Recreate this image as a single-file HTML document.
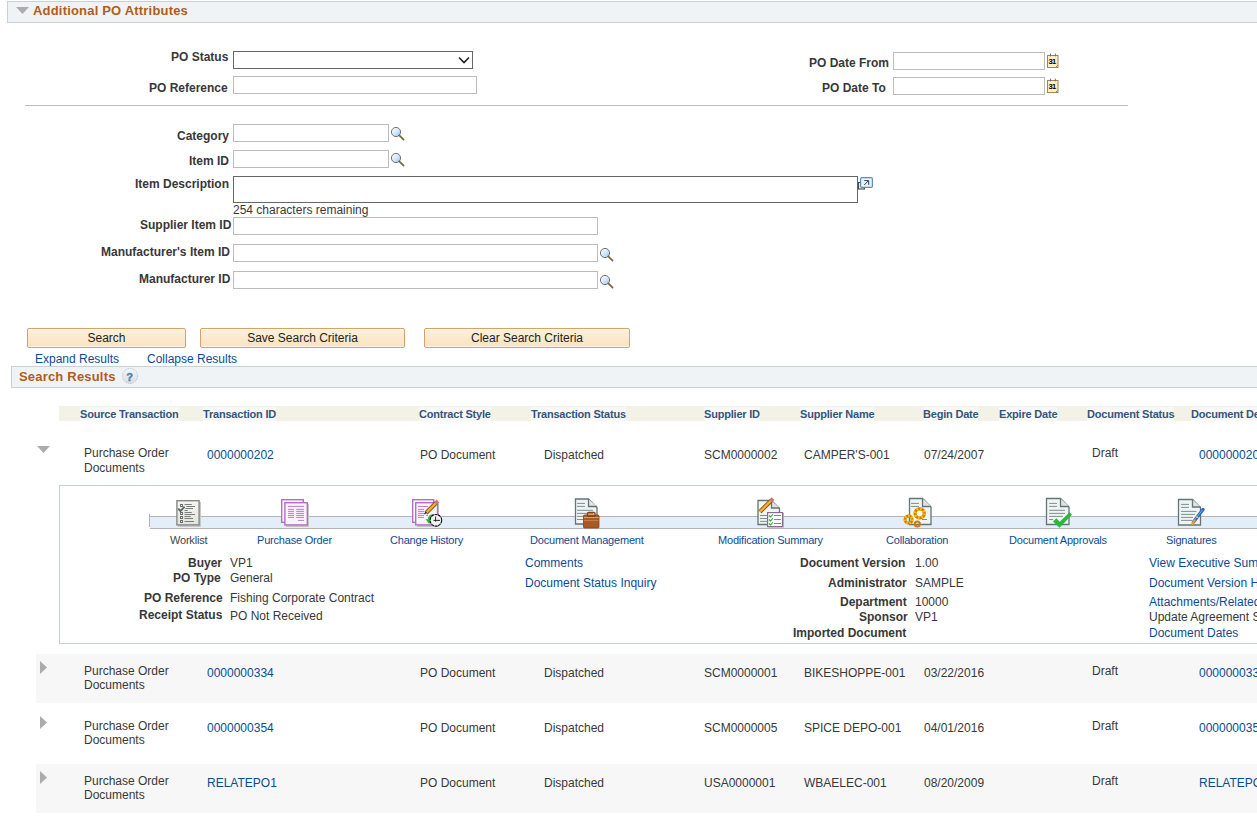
<!DOCTYPE html>
<html><head><meta charset="utf-8">
<style>
html,body{margin:0;padding:0;background:#fff;}
body{width:1257px;height:833px;overflow:hidden;position:relative;font-family:"Liberation Sans",sans-serif;}
.a{position:absolute;white-space:nowrap;}
.lb{position:absolute;white-space:nowrap;font:bold 12px/14px "Liberation Sans",sans-serif;color:#383838;}
.tx{position:absolute;white-space:nowrap;font:12px/14px "Liberation Sans",sans-serif;color:#383838;}
.lk{position:absolute;white-space:nowrap;font:12px/14px "Liberation Sans",sans-serif;color:#0a4b96;}
.inp{position:absolute;box-sizing:border-box;border:1px solid #bcbcbc;background:#fff;height:18px;}
.hdr{position:absolute;box-sizing:border-box;border:1px solid #cbd0d7;background:#f0f3f5;}
.ht{position:absolute;white-space:nowrap;font:bold 13px/16px "Liberation Sans",sans-serif;color:#b35c17;letter-spacing:0.19px;}
.btn{position:absolute;box-sizing:border-box;border:1px solid #d9a06a;border-radius:2px;height:20px;
 background:linear-gradient(#fdf0da,#f9e3c0);font:12px/18px "Liberation Sans",sans-serif;color:#222;text-align:center;box-shadow:inset 0 1px 0 #fffaf0,inset 0 -1px 0 #fdf3e2;}
.th{position:absolute;white-space:nowrap;font:bold 11px/13px "Liberation Sans",sans-serif;color:#36557a;letter-spacing:-0.2px;background:#f8f8f6;height:14px;line-height:15px;}
.ic{position:absolute;}
.il{position:absolute;white-space:nowrap;font:11px/13px "Liberation Sans",sans-serif;color:#0a4b96;letter-spacing:-0.2px;}
</style></head><body>

<!-- Additional PO Attributes header -->
<div class="hdr" style="left:7px;top:1px;width:1260px;height:22px;"></div>
<svg class="ic" style="left:16px;top:7px" width="14" height="7" viewBox="0 0 14 7"><path d="M0 0H13L6.5 7Z" fill="#acacac"/></svg>
<div class="ht" style="left:33px;top:3px">Additional PO Attributes</div>

<!-- PO Status row -->
<div class="lb" style="left:171px;top:50px">PO Status</div>
<div class="inp" style="left:233px;top:51px;width:240px;height:18px;border-color:#666"></div>
<svg class="ic" style="left:458px;top:56px" width="12" height="8" viewBox="0 0 12 8"><path d="M1 1.5L6 6.5L11 1.5" fill="none" stroke="#222" stroke-width="1.6"/></svg>
<div class="lb" style="left:149px;top:81px">PO Reference</div>
<div class="inp" style="left:233px;top:76px;width:244px;"></div>

<div class="lb" style="left:809px;top:56px">PO Date From</div>
<div class="inp" style="left:893px;top:52px;width:152px;"></div>
<div class="lb" style="left:822px;top:81px">PO Date To</div>
<div class="inp" style="left:893px;top:77px;width:152px;"></div>

<div class="a" style="left:25px;top:105px;width:1103px;height:1px;background:#bdbdbd"></div>

<div class="lb" style="left:177px;top:129px">Category</div>
<div class="inp" style="left:233px;top:124px;width:156px;"></div>
<div class="lb" style="left:189px;top:154px">Item ID</div>
<div class="inp" style="left:233px;top:150px;width:156px;"></div>
<div class="lb" style="left:135px;top:177px">Item Description</div>
<div class="inp" style="left:233px;top:176px;width:625px;height:27px;border-color:#666"></div>
<div class="tx" style="left:233px;top:203px">254 characters remaining</div>
<div class="lb" style="left:140px;top:218px">Supplier Item ID</div>
<div class="inp" style="left:233px;top:217px;width:365px;"></div>
<div class="lb" style="left:101px;top:245px">Manufacturer's Item ID</div>
<div class="inp" style="left:233px;top:244px;width:365px;"></div>
<div class="lb" style="left:139px;top:272px">Manufacturer ID</div>
<div class="inp" style="left:233px;top:271px;width:365px;"></div>

<!-- buttons -->
<div class="btn" style="left:27px;top:328px;width:159px;">Search</div>
<div class="btn" style="left:200px;top:328px;width:205px;">Save Search Criteria</div>
<div class="btn" style="left:424px;top:328px;width:206px;">Clear Search Criteria</div>
<div class="lk" style="left:35px;top:352px">Expand Results</div>
<div class="lk" style="left:147px;top:352px">Collapse Results</div>

<!-- Search Results header -->
<div class="hdr" style="left:11px;top:366px;width:1260px;height:22px;"></div>
<div class="ht" style="left:19px;top:369px">Search Results</div>

<!-- ICONS_PLACEHOLDER -->


<!-- results header -->
<div class="a" style="left:59px;top:406px;width:1200px;height:15px;background:#f2f2e6"></div>
<div class="th" style="left:80px;top:407px">Source Transaction</div>
<div class="th" style="left:203px;top:407px">Transaction ID</div>
<div class="th" style="left:419px;top:407px">Contract Style</div>
<div class="th" style="left:531px;top:407px">Transaction Status</div>
<div class="th" style="left:704px;top:407px">Supplier ID</div>
<div class="th" style="left:800px;top:407px">Supplier Name</div>
<div class="th" style="left:923px;top:407px">Begin Date</div>
<div class="th" style="left:999px;top:407px">Expire Date</div>
<div class="th" style="left:1087px;top:407px">Document Status</div>
<div class="th" style="left:1191px;top:407px">Document Description</div>

<!-- row 1 expanded -->
<svg class="ic" style="left:37px;top:446px" width="14" height="7" viewBox="0 0 14 7"><path d="M0 0H13L6.5 7Z" fill="#acacac"/></svg>
<div class="tx" style="left:84px;top:446px;line-height:15px">Purchase Order<br>Documents</div>
<div class="lk" style="left:207px;top:448px">0000000202</div>
<div class="tx" style="left:420px;top:448px">PO Document</div>
<div class="tx" style="left:544px;top:448px">Dispatched</div>
<div class="tx" style="left:704px;top:448px">SCM0000002</div>
<div class="tx" style="left:804px;top:448px">CAMPER'S-001</div>
<div class="tx" style="left:924px;top:448px">07/24/2007</div>
<div class="tx" style="left:1092px;top:446px">Draft</div>
<div class="lk" style="left:1199px;top:448px">0000000202</div>

<!-- detail panel -->
<div class="a" style="left:59px;top:485px;width:1250px;height:159px;box-sizing:border-box;border:1px solid #c9ced6;background:#fff"></div>
<div class="a" style="left:149px;top:514px;width:1px;height:13px;background:#b4b4b4"></div>
<div class="a" style="left:150px;top:516px;width:1150px;height:13px;box-sizing:border-box;border-top:1px solid #b4b4b4;border-bottom:1px solid #b4b4b4;background:#e4eefa"></div>

<div class="il" style="left:170px;top:534px;color:#444">Worklist</div>
<div class="il" style="left:257px;top:534px">Purchase Order</div>
<div class="il" style="left:390px;top:534px">Change History</div>
<div class="il" style="left:530px;top:534px">Document Management</div>
<div class="il" style="left:718px;top:534px">Modification Summary</div>
<div class="il" style="left:886px;top:534px">Collaboration</div>
<div class="il" style="left:1009px;top:534px">Document Approvals</div>
<div class="il" style="left:1166px;top:534px">Signatures</div>

<div class="lb" style="left:188px;top:556px">Buyer</div>
<div class="tx" style="left:230px;top:556px">VP1</div>
<div class="lb" style="left:173px;top:571px">PO Type</div>
<div class="tx" style="left:230px;top:571px">General</div>
<div class="lb" style="left:144px;top:591px">PO Reference</div>
<div class="tx" style="left:230px;top:591px">Fishing Corporate Contract</div>
<div class="lb" style="left:139px;top:608px">Receipt Status</div>
<div class="tx" style="left:230px;top:609px">PO Not Received</div>

<div class="lk" style="left:525px;top:556px">Comments</div>
<div class="lk" style="left:525px;top:576px">Document Status Inquiry</div>

<div class="lb" style="left:800px;top:556px">Document Version</div>
<div class="tx" style="left:915px;top:556px">1.00</div>
<div class="lb" style="left:828px;top:576px">Administrator</div>
<div class="tx" style="left:915px;top:576px">SAMPLE</div>
<div class="lb" style="left:840px;top:595px">Department</div>
<div class="tx" style="left:915px;top:595px">10000</div>
<div class="lb" style="left:859px;top:610px">Sponsor</div>
<div class="tx" style="left:915px;top:610px">VP1</div>
<div class="lb" style="left:793px;top:626px">Imported Document</div>

<div class="lk" style="left:1149px;top:556px">View Executive Summary</div>
<div class="lk" style="left:1149px;top:576px">Document Version History</div>
<div class="lk" style="left:1149px;top:595px">Attachments/Related Documents</div>
<div class="tx" style="left:1149px;top:610px">Update Agreement Status</div>
<div class="lk" style="left:1149px;top:626px">Document Dates</div>
<div class="a" style="left:36px;top:654px;width:1230px;height:49px;background:#f7f7f7"></div>
<svg class="ic" style="left:40px;top:661px" width="7" height="13" viewBox="0 0 7 13"><path d="M0 0L7 6.5L0 13Z" fill="#acacac"/></svg>
<div class="tx" style="left:84px;top:664px">Purchase Order<br>Documents</div>
<div class="lk" style="left:207px;top:666px">0000000334</div>
<div class="tx" style="left:420px;top:666px">PO Document</div>
<div class="tx" style="left:544px;top:666px">Dispatched</div>
<div class="tx" style="left:704px;top:666px">SCM0000001</div>
<div class="tx" style="left:804px;top:666px">BIKESHOPPE-001</div>
<div class="tx" style="left:924px;top:666px">03/22/2016</div>
<div class="tx" style="left:1092px;top:664px">Draft</div>
<div class="lk" style="left:1199px;top:666px">0000000334</div>
<svg class="ic" style="left:40px;top:716px" width="7" height="13" viewBox="0 0 7 13"><path d="M0 0L7 6.5L0 13Z" fill="#acacac"/></svg>
<div class="tx" style="left:84px;top:719px">Purchase Order<br>Documents</div>
<div class="lk" style="left:207px;top:721px">0000000354</div>
<div class="tx" style="left:420px;top:721px">PO Document</div>
<div class="tx" style="left:544px;top:721px">Dispatched</div>
<div class="tx" style="left:704px;top:721px">SCM0000005</div>
<div class="tx" style="left:804px;top:721px">SPICE DEPO-001</div>
<div class="tx" style="left:924px;top:721px">04/01/2016</div>
<div class="tx" style="left:1092px;top:719px">Draft</div>
<div class="lk" style="left:1199px;top:721px">0000000354</div>
<div class="a" style="left:36px;top:764px;width:1230px;height:49px;background:#f7f7f7"></div>
<svg class="ic" style="left:40px;top:771px" width="7" height="13" viewBox="0 0 7 13"><path d="M0 0L7 6.5L0 13Z" fill="#acacac"/></svg>
<div class="tx" style="left:84px;top:774px">Purchase Order<br>Documents</div>
<div class="lk" style="left:207px;top:776px">RELATEPO1</div>
<div class="tx" style="left:420px;top:776px">PO Document</div>
<div class="tx" style="left:544px;top:776px">Dispatched</div>
<div class="tx" style="left:704px;top:776px">USA0000001</div>
<div class="tx" style="left:804px;top:776px">WBAELEC-001</div>
<div class="tx" style="left:924px;top:776px">08/20/2009</div>
<div class="tx" style="left:1092px;top:774px">Draft</div>
<div class="lk" style="left:1199px;top:776px">RELATEPO1</div>


<svg class="ic" style="left:0;top:0" width="1257" height="833" viewBox="0 0 1257 833">
<defs>
<linearGradient id="gw" x1="0" y1="0" x2="0" y2="1"><stop offset="0" stop-color="#f4f5f3"/><stop offset="1" stop-color="#dfe6da"/></linearGradient>
<linearGradient id="gm" x1="0" y1="0" x2="1" y2="1"><stop offset="0" stop-color="#ffffff"/><stop offset="0.5" stop-color="#d8e8fb"/><stop offset="1" stop-color="#8fc3f5"/></linearGradient>
<linearGradient id="gh" x1="0" y1="0" x2="0" y2="1"><stop offset="0" stop-color="#f6f6f6"/><stop offset="1" stop-color="#dcdcdc"/></linearGradient>
</defs>
<!-- calendars -->
<g id="cal1">
<rect x="1047.5" y="55.5" width="10.5" height="12" fill="#fbefc4" stroke="#9c8550" stroke-width="1"/>
<path d="M1055.5 67.5L1058 65" stroke="#9c8550" stroke-width="1" fill="#e0d090"/>
<rect x="1050" y="53.6" width="0.9" height="2.8" fill="#6e5e90"/><rect x="1054.9" y="53.6" width="0.9" height="2.8" fill="#6e5e90"/>
<text x="1048.6" y="64.2" font-family="Liberation Sans" font-weight="bold" font-size="7.6" fill="#000" letter-spacing="-0.7">31</text>
</g>
<g transform="translate(0,25)">
<rect x="1047.5" y="55.5" width="10.5" height="12" fill="#fbefc4" stroke="#9c8550" stroke-width="1"/>
<path d="M1055.5 67.5L1058 65" stroke="#9c8550" stroke-width="1" fill="#e0d090"/>
<rect x="1050" y="53.6" width="0.9" height="2.8" fill="#6e5e90"/><rect x="1054.9" y="53.6" width="0.9" height="2.8" fill="#6e5e90"/>
<text x="1048.6" y="64.2" font-family="Liberation Sans" font-weight="bold" font-size="7.6" fill="#000" letter-spacing="-0.7">31</text>
</g>
<!-- magnifiers -->
<g id="mag">
<circle cx="396" cy="132" r="4.6" fill="url(#gm)" stroke="#707070" stroke-width="1"/>
<path d="M399.3 135.3L403.6 139.6" stroke="#736b3a" stroke-width="1.7" stroke-linecap="round"/>
</g>
<g transform="translate(0,26)">
<circle cx="396" cy="132" r="4.6" fill="url(#gm)" stroke="#707070" stroke-width="1"/>
<path d="M399.3 135.3L403.6 139.6" stroke="#736b3a" stroke-width="1.7" stroke-linecap="round"/>
</g>
<g transform="translate(209,121)">
<circle cx="396" cy="132" r="4.6" fill="url(#gm)" stroke="#707070" stroke-width="1"/>
<path d="M399.3 135.3L403.6 139.6" stroke="#736b3a" stroke-width="1.7" stroke-linecap="round"/>
</g>
<g transform="translate(209,148)">
<circle cx="396" cy="132" r="4.6" fill="url(#gm)" stroke="#707070" stroke-width="1"/>
<path d="M399.3 135.3L403.6 139.6" stroke="#736b3a" stroke-width="1.7" stroke-linecap="round"/>
</g>
<!-- expand textarea icon -->
<rect x="858.5" y="182.5" width="6" height="6.5" fill="#eef2f4" stroke="#4a4a4a" stroke-width="1.1"/>
<rect x="860.6" y="177.6" width="11.8" height="9.8" rx="1.2" fill="#eef1f2" stroke="#5b8cbc" stroke-width="1.2"/>
<path d="M864.2 185L868.3 180.9M864.3 180.6H868.7V184.8" stroke="#2e3e50" stroke-width="1" fill="none"/>
<!-- help icon -->
<circle cx="130" cy="376" r="7.5" fill="url(#gh)" stroke="#a9bfe6" stroke-width="0.9" stroke-dasharray="1.5 1"/>
<text x="126.3" y="380.5" font-family="Liberation Sans" font-weight="bold" font-size="11" fill="#4a82b0" stroke="#4a82b0" stroke-width="0.4">?</text>
<!-- Worklist icon -->
<rect x="178" y="502" width="23" height="25" fill="#c9c9c9"/>
<rect x="176.9" y="500.7" width="22.2" height="24.2" fill="url(#gw)" stroke="#888" stroke-width="1.4"/>
<g stroke="#6e6e6e" stroke-width="1" fill="#fff">
<rect x="180.5" y="504.5" width="2" height="2"/>
<rect x="180.5" y="512.5" width="2" height="2"/>
<rect x="180.5" y="516.5" width="2" height="2"/>
<rect x="180.5" y="520.5" width="2" height="2"/>
</g>
<g stroke="#707070" stroke-width="0.9" fill="none">
<path d="M184.5 504.5H191.8M186.3 506.5H195M185.3 508.5H193M184.5 510.5H187.7M184.5 512.5H191.8M184.5 514.5H195M184.5 516.5H190.8M184.5 518.5H193M184.5 521.5H194"/>
</g>
<path d="M178.2 508.6L180.5 511L184.6 506.6" stroke="#666" stroke-width="1.9" fill="none"/>
<!-- Purchase Order icon -->
<rect x="281.7" y="499.7" width="21.6" height="22.6" fill="#fff" stroke="#b46ec6" stroke-width="1.4"/>
<rect x="286" y="504" width="23" height="23" fill="#c4c4c4"/>
<rect x="284.9" y="502.7" width="22.4" height="22.2" fill="#fbf3fc" stroke="#b46ec6" stroke-width="1.4"/>
<g stroke="#b46ec6" stroke-width="0.9">
<path d="M288 506.4H304M288 509.4H294M296.2 509.4H304M288 511.4H294M296.2 511.4H304M288 513.4H294M296.2 513.4H304M288 515.4H294M296.2 515.4H304M288 517.4H294M296.2 517.4H304M298 520.4H304"/>
</g>

<!-- Change History icon -->
<rect x="412.7" y="499.7" width="21" height="22.6" fill="#fff" stroke="#b46ec6" stroke-width="1.4"/>
<rect x="417" y="504" width="22" height="23" fill="#c4c4c4"/>
<rect x="415.7" y="502.7" width="21.8" height="22.2" fill="#fbf3fc" stroke="#b46ec6" stroke-width="1.4"/>
<g stroke="#b46ec6" stroke-width="0.9">
<path d="M418 506.4H428M418 509.4H424M418 511.4H424M418 513.4H424M418 515.4H424M418 517.4H424M426 515.4H428"/>
</g>
<path d="M426 513L436.5 502.5" stroke="#8a4a14" stroke-width="4.2" stroke-linecap="butt"/>
<path d="M426 513L436.5 502.5" stroke="#f0b030" stroke-width="2.4"/>
<path d="M435.5 503.5L438 501" stroke="#c87878" stroke-width="4"/>
<path d="M424.5 514L426.5 512" stroke="#223366" stroke-width="1.5"/>
<path d="M433.8 515.2Q429.3 515.6 429 519.5" stroke="#2ab040" stroke-width="2.6" fill="none"/>
<path d="M425.6 519.2H432.6L429.1 523.9Z" fill="#2ab040"/>
<circle cx="435.9" cy="520.3" r="5.8" fill="#eef2f2" stroke="#111" stroke-width="1.1" stroke-dasharray="3 0.6"/>
<path d="M435.6 516.6V521.6M433.5 520.4H440" stroke="#111" stroke-width="0.9" fill="none"/>

<!-- Document Management icon -->
<path d="M575.5 499H588.5L597 507.5V524H575.5Z" fill="#f1f4f4" stroke="#617676" stroke-width="1.3"/>
<path d="M588.5 499V506.5H597" fill="#e0e4e4" stroke="#617676" stroke-width="1.3"/>
<g stroke="#6f8383" stroke-width="0.9"><path d="M577 503.4H585M577 506.4H585M577 510.3H593M577 513.4H593M577 516.4H593M577 519.5H593"/></g>
<rect x="583.5" y="515" width="15.5" height="13" rx="1" fill="#a95a22" stroke="#8c400e" stroke-width="0.8"/>
<rect x="587.5" y="512.5" width="7.5" height="4" rx="1" fill="none" stroke="#8c400e" stroke-width="1.3"/>
<path d="M584 517.5H598.5" stroke="#e0a060" stroke-width="1"/>
<path d="M584 520.5H598.5" stroke="#c8885a" stroke-width="0.8"/>

<!-- Modification Summary icon -->
<path d="M758 500.5H771.5L779.5 508.5V524.5H758Z" fill="#f1f4f4" stroke="#617676" stroke-width="1.3"/>
<path d="M771.5 500.5V508H779.5" fill="#e0e4e4" stroke="#617676" stroke-width="1.3"/>
<g stroke="#6f8383" stroke-width="0.9"><path d="M760 515.5H767M760 518.5H767M760 521.4H767"/></g>
<path d="M760 511.7L771.3 500.4" stroke="#8a4a14" stroke-width="4.2"/>
<path d="M760 511.7L771.3 500.4" stroke="#f0b030" stroke-width="2.4"/>
<path d="M770.6 501.1L773 498.7" stroke="#c87878" stroke-width="4"/>
<rect x="768.5" y="513" width="15.5" height="14.5" fill="#c0c0c0"/>
<rect x="767.6" y="512.6" width="15" height="14" fill="#fff" stroke="#8a6a8a" stroke-width="1.2"/>
<g stroke="#23a83a" stroke-width="1.1" fill="none"><path d="M769 515.5L770.5 517L772.8 514.3M769 519.5L770.5 521L772.8 518.3M769 523.5L770.5 525L772.8 522.3"/></g>
<g stroke="#8a6a8a" stroke-width="0.9"><path d="M774 515.5H781M774 519.5H781M774 523.5H781"/></g>

<!-- Collaboration icon -->
<path d="M909.5 498.5H922.5L931 507V524.5H909.5Z" fill="#f1f4f4" stroke="#617676" stroke-width="1.3"/>
<path d="M922.5 498.5V506.5H931" fill="#e0e4e4" stroke="#617676" stroke-width="1.3"/>
<g stroke="#6f8383" stroke-width="0.9"><path d="M911 503.4H919M911 506.4H919M922 519.5H927"/></g>
<g fill="none" stroke-linecap="butt">
<circle cx="919.7" cy="513.4" r="4.6" stroke="#d27a0a" stroke-width="3.2"/>
<circle cx="919.7" cy="513.4" r="4.6" stroke="#f5c400" stroke-width="3.2" stroke-dasharray="1.6 2"/>
<circle cx="908.6" cy="519.6" r="3.6" stroke="#d27a0a" stroke-width="2.8"/>
<circle cx="908.6" cy="519.6" r="3.6" stroke="#f5c400" stroke-width="2.8" stroke-dasharray="1.4 1.8"/>
<circle cx="917.3" cy="524" r="2.6" stroke="#d27a0a" stroke-width="2"/>
</g>

<!-- Document Approvals icon -->
<path d="M1046.5 498.5H1060.5L1069 507V524.5H1046.5Z" fill="#f1f4f4" stroke="#617676" stroke-width="1.3"/>
<path d="M1060.5 498.5V506.5H1069" fill="#e0e4e4" stroke="#617676" stroke-width="1.3"/>
<g stroke="#6f8383" stroke-width="0.9"><path d="M1049.2 503.4H1057M1049.2 506.4H1057M1049.2 510.3H1065M1049.2 513.4H1065M1049.2 516.4H1063M1049.2 519.5H1053"/></g>
<path d="M1053 521.5L1056.4 518.2L1059.7 521.8L1069.6 512.2L1072 514.8L1059.5 527.8Z" fill="#2db83d"/>

<!-- Signatures icon -->
<path d="M1178.5 499.5H1192.5L1200.5 507.5V525H1178.5Z" fill="#f1f4f4" stroke="#617676" stroke-width="1.3"/>
<path d="M1192.5 499.5V507H1200.5" fill="#e0e4e4" stroke="#617676" stroke-width="1.3"/>
<g stroke="#6f8383" stroke-width="0.9"><path d="M1181 504.4H1189M1181 507.4H1189M1181 511.4H1196.5M1181 514.4H1195M1181 517.4H1193M1181 520.4H1192"/></g>
<path d="M1193.5 522L1203 509.5" stroke="#2c64c8" stroke-width="3.3" stroke-linecap="round"/>
<path d="M1194 520.5L1202.5 510" stroke="#6fb0f0" stroke-width="1"/>
<path d="M1196 516.5L1198.5 518" stroke="#f0c040" stroke-width="1.2"/>
<path d="M1192.2 523.8L1194.6 520.6" stroke="#f0a020" stroke-width="2.2" stroke-linecap="round"/>
</svg>

</body></html>
